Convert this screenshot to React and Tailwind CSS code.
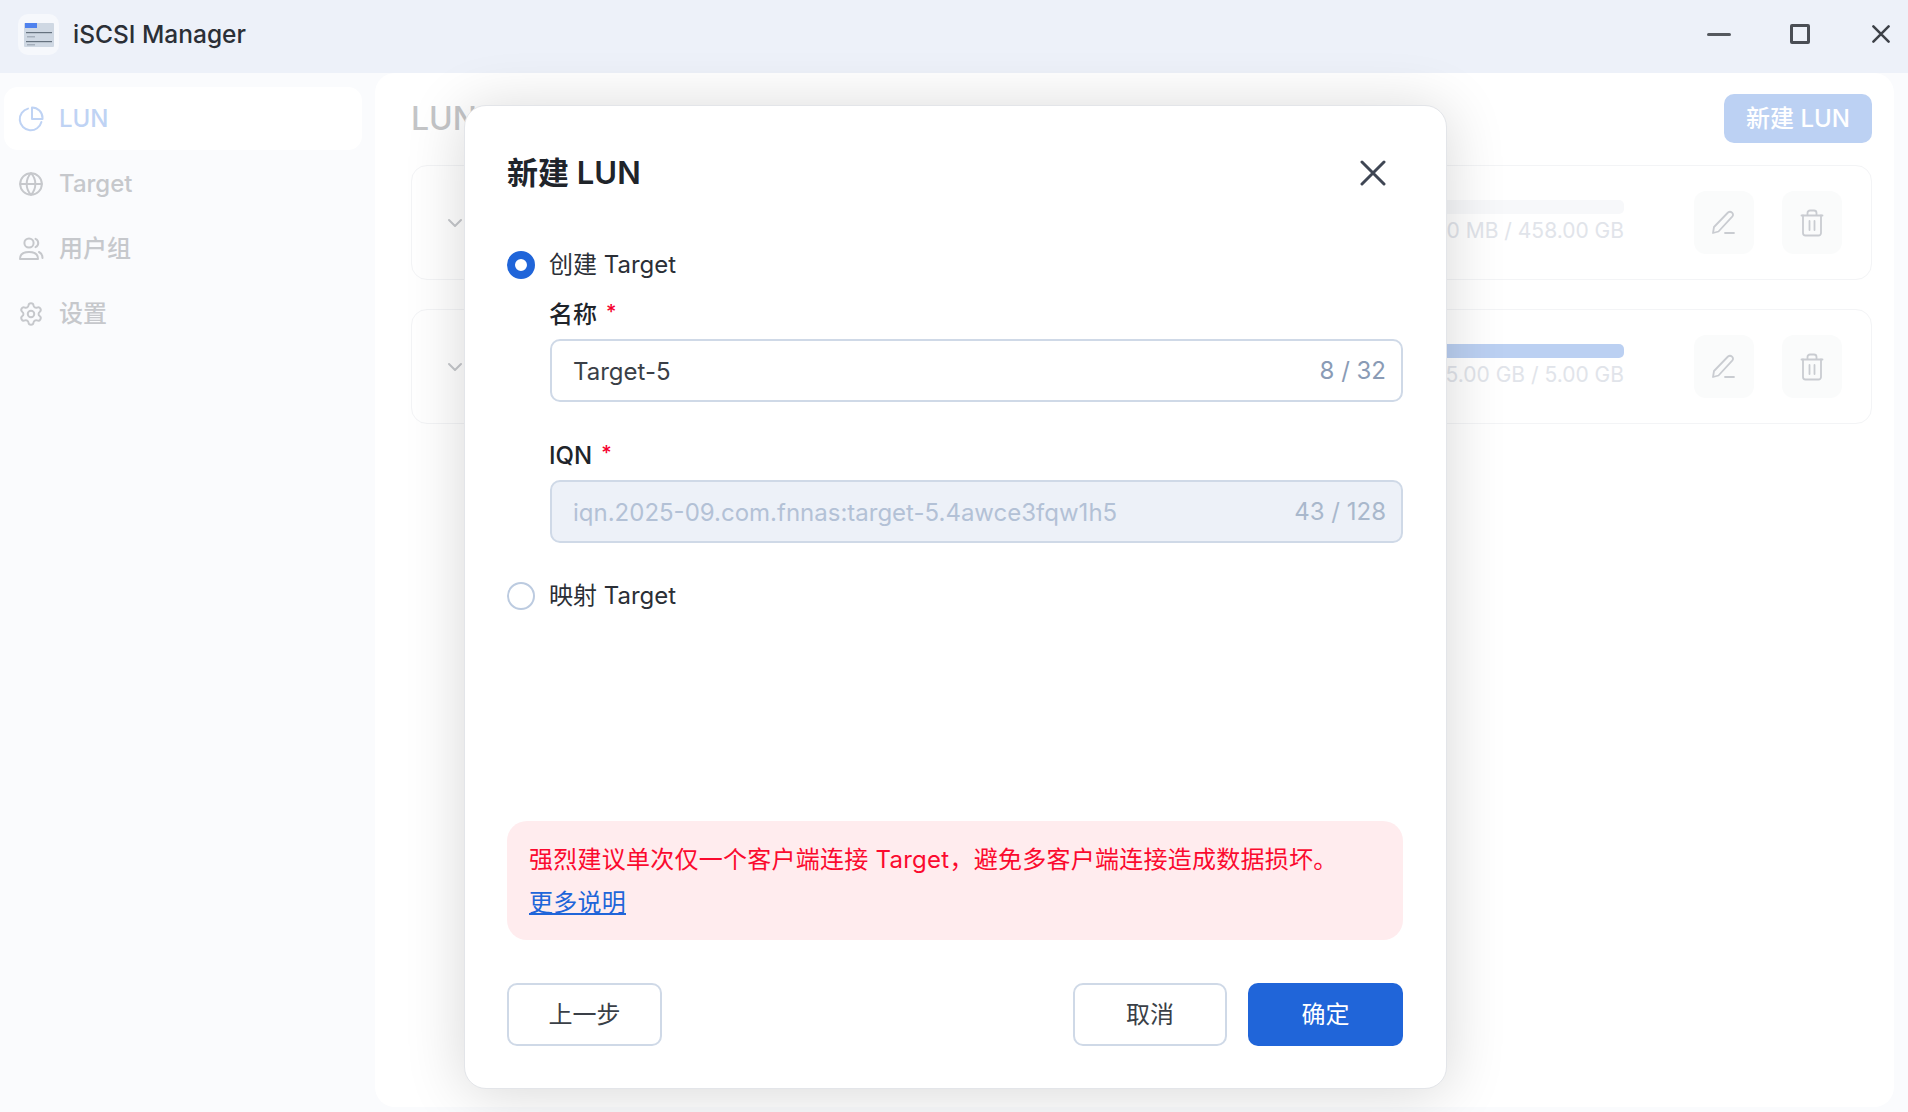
import { Globe, Settings, ChevronDown } from "lucide-react";

const font = "font-['Inter','Noto_Sans_CJK_SC',sans-serif]";

function AppIcon() {
  return (
    <div className="w-[41px] h-[41px] rounded-[10px] bg-[#f6f8fc] flex items-center justify-center">
      <svg width="32" height="28" viewBox="0 0 32 28">
        <rect x="1" y="3" width="30" height="24" rx="1" fill="#cfd8e3" />
        <rect x="2" y="3" width="12" height="5" fill="#4f82ee" />
        <rect x="3" y="12" width="26" height="1.2" fill="#66727f" />
        <rect x="3" y="21" width="26" height="1.2" fill="#66727f" />
        <rect x="4" y="16" width="8" height="1.5" fill="#a5afbc" />
        <rect x="4" y="24" width="8" height="1.5" fill="#a5afbc" />
      </svg>
    </div>
  );
}

function PieIcon() {
  return (
    <svg width="26" height="26" viewBox="0 0 26 26" fill="none" stroke="#bfd3f4" strokeWidth="2" strokeLinecap="round" strokeLinejoin="round">
      <path d="M10 2.6a11 11 0 1 0 13.4 13.4" />
      <path d="M14 1.5a10.5 10.5 0 0 1 10.5 10.5v1H14z" />
    </svg>
  );
}

function UsersIcon() {
  return (
    <svg width="26" height="26" viewBox="0 0 26 26" fill="none" stroke="#c6c8cc" strokeWidth="2" strokeLinecap="round" strokeLinejoin="round">
      <circle cx="11" cy="7" r="4.6" />
      <path d="M2 23c0-4.500 3.500-7 9-7s9 2.500 9 7z" />
      <path d="M17.500 2.800a4.600 4.600 0 0 1 0 8.400" />
      <path d="M21 16c2 1 3.500 3 3.500 6" />
    </svg>
  );
}

function PencilIcon() {
  return (
    <svg width="26" height="26" viewBox="0 0 26 26" fill="none" stroke="#c9ccd1" strokeWidth="1.8" strokeLinecap="round" strokeLinejoin="round">
      <path d="M2 23l1-6L17 2.500c1.200-1 2.800-1 4 .2s1.200 2.800.2 4L7.500 21.500z" />
      <path d="M14 23h9" />
    </svg>
  );
}

function TrashIcon() {
  return (
    <svg width="24" height="28" viewBox="0 0 24 28" fill="none" stroke="#c9ccd1" strokeWidth="1.8" strokeLinecap="round" strokeLinejoin="round">
      <path d="M1.500 6.500h21" />
      <path d="M7.500 6V4a2.500 2.500 0 0 1 2.500-2.500h4A2.500 2.500 0 0 1 16.500 4v2" />
      <path d="M3 6.500V24a2.500 2.500 0 0 0 2.500 2.500h13A2.500 2.500 0 0 0 21 24V6.500" />
      <path d="M9.500 12v9M14.500 12v9" />
    </svg>
  );
}

function CloseIcon({ size = 26, stroke = "#3f4654", width = 3 }) {
  return (
    <svg width={size} height={size} viewBox="0 0 26 26" fill="none" stroke={stroke} strokeWidth={width} strokeLinecap="round">
      <path d="M2 2l22 22M24 2L2 24" />
    </svg>
  );
}

function NavItem({ icon, label, active }) {
  return (
    <div className={`h-[63px] rounded-[14px] flex items-center gap-[15px] pl-[14px] text-[24px] font-medium ${active ? "bg-white text-[#bfd3f4]" : "text-[#c6c8cc]"}`}>
      {icon}
      <span>{label}</span>
    </div>
  );
}

function LunRow({ used, fill }) {
  return (
    <div className="h-[115px] rounded-[16px] border border-[#f3f4f6] flex items-center pl-[31px] pr-[29px]">
      <ChevronDown size={24} color="#c6c8cc" />
      <div className="ml-auto w-[400px] mr-[70px]">
        <div className="h-[14px] rounded-[5px] bg-[#f7f8fa] overflow-hidden mb-[2px]">
          <div className={`h-full bg-[#bbd0f2] ${fill}`} />
        </div>
        <div className="text-right text-[21px] leading-[30px] text-[#e1e4ea]">{used}</div>
      </div>
      <div className="flex gap-[28px]">
        <div className="w-[60px] h-[63px] rounded-[12px] bg-[#fafbfb] flex items-center justify-center"><PencilIcon /></div>
        <div className="w-[60px] h-[63px] rounded-[12px] bg-[#fafbfb] flex items-center justify-center"><TrashIcon /></div>
      </div>
    </div>
  );
}

function Radio({ checked, label }) {
  return (
    <div className="flex items-center gap-[14px] h-[30px]">
      {checked ? (
        <span className="w-[28px] h-[28px] rounded-full border-[8px] border-[#2065d9] bg-white" />
      ) : (
        <span className="w-[28px] h-[28px] rounded-full border-2 border-[#bccbe0] bg-white" />
      )}
      <span className="text-[24px] text-[#2b2f36]">{label}</span>
    </div>
  );
}

function Field({ label, value, count, disabled }) {
  return (
    <div>
      <div className="h-[30px] -ml-[1px] flex items-center text-[24px] font-medium text-[#20242a]">
        {label}
        <span className="ml-[9px] text-[#f5002d] text-[20px] leading-none -mt-[6px]">*</span>
      </div>
      <div className={`mt-[9px] h-[63px] rounded-[10px] border-2 border-[#cfd9e7] flex items-center justify-between pl-[21px] pr-[15px] text-[24px] ${disabled ? "bg-[#edf1f8] text-[#b3c1d6]" : "bg-white text-[#3a3f47]"}`}>
        <span className="pt-[2px]">{value}</span>
        <span className={disabled ? "text-[#a9b8cc]" : "text-[#8a9bb5]"}>{count}</span>
      </div>
    </div>
  );
}

export default function App() {
  return (
    <div className={`relative w-[1908px] h-[1112px] overflow-hidden bg-[#fafbfd] ${font}`}>
      <header className="h-[73px] bg-[#edf1f9] flex items-center pl-[18px] pr-[18px] pb-[5px]">
        <AppIcon />
        <h1 className="ml-[14px] text-[24.5px] font-medium text-[#2b2f36]">iSCSI Manager</h1>
        <div className="ml-auto flex items-center">
          <div className="w-[24px] h-[3px] rounded-full bg-[#55595f]" />
          <div className="ml-[59px] w-[20px] h-[20px] border-[3px] border-[#4a4e55] rounded-[2px]" />
          <div className="ml-[62px]">
            <CloseIcon size={18} stroke="#3d4148" width={3.6} />
          </div>
        </div>
      </header>

      <div className="flex h-[1039px]">
        <nav className="w-[375px] pt-[14px] pl-[4px] pr-[13px] flex flex-col gap-[2px]">
          <NavItem active label="LUN" icon={<PieIcon />} />
          <NavItem label="Target" icon={<Globe size={26} color="#c6c8cc" strokeWidth={1.8} />} />
          <NavItem label="用户组" icon={<UsersIcon />} />
          <NavItem label="设置" icon={<Settings size={26} color="#c6c8cc" strokeWidth={1.8} />} />
        </nav>
        <main className="flex-1 mr-[14px] mb-[5px] bg-white rounded-[20px] pl-[36px] pr-[22px] pt-[21px]">
          <div className="flex items-center justify-between h-[49px]">
            <h2 className="text-[32px] font-medium text-[#c4c5c7]">LUN</h2>
            <button className="w-[148px] h-[49px] rounded-[10px] bg-[#bcd1f3] text-white text-[24px] font-medium">新建 LUN</button>
          </div>
          <div className="mt-[22px] flex flex-col gap-[29px]">
            <LunRow used="0 MB / 458.00 GB" fill="w-0" />
            <LunRow used="5.00 GB / 5.00 GB" fill="w-full" />
          </div>
        </main>
      </div>

      <div className="absolute left-[464px] top-[105px] w-[983px] h-[984px] bg-white rounded-[22px] border border-[#e3e5e9] shadow-[0_4px_60px_rgba(0,0,0,0.16)] pl-[42px] pr-[43px] flex flex-col">
        <div className="h-[134px] flex items-center justify-between pr-[17px]">
          <h3 className="text-[31px] font-semibold text-[#20242a]">新建 LUN</h3>
          <CloseIcon />
        </div>
        <div className="mt-[10px]">
          <Radio checked label="创建 Target" />
        </div>
        <div className="ml-[43px] mt-[20px] flex flex-col gap-[39px]">
          <Field label="名称" value="Target-5" count="8 / 32" />
          <Field label="IQN" value="iqn.2025-09.com.fnnas:target-5.4awce3fqw1h5" count="43 / 128" disabled />
        </div>
        <div className="mt-[38px]">
          <Radio label="映射 Target" />
        </div>
        <div className="mt-auto rounded-[20px] bg-[#ffecee] h-[119px] pl-[22px] pt-[18px] text-[24px] leading-[42.5px] tracking-[0.25px] text-[#fb0a2e]">
          <p>强烈建议单次仅一个客户端连接 Target，避免多客户端连接造成数据损坏。</p>
          <a className="text-[#2065d9] underline">更多说明</a>
        </div>
        <div className="mt-[43px] mb-[42px] flex items-center text-[24px]">
          <button className="w-[155px] h-[63px] rounded-[10px] border-2 border-[#cfd9e7] text-[#3a3f47]">上一步</button>
          <button className="ml-auto w-[154px] h-[63px] rounded-[10px] border-2 border-[#cfd9e7] text-[#3a3f47]">取消</button>
          <button className="ml-[21px] w-[155px] h-[63px] rounded-[10px] bg-[#2065d9] text-white">确定</button>
        </div>
      </div>
    </div>
  );
}
